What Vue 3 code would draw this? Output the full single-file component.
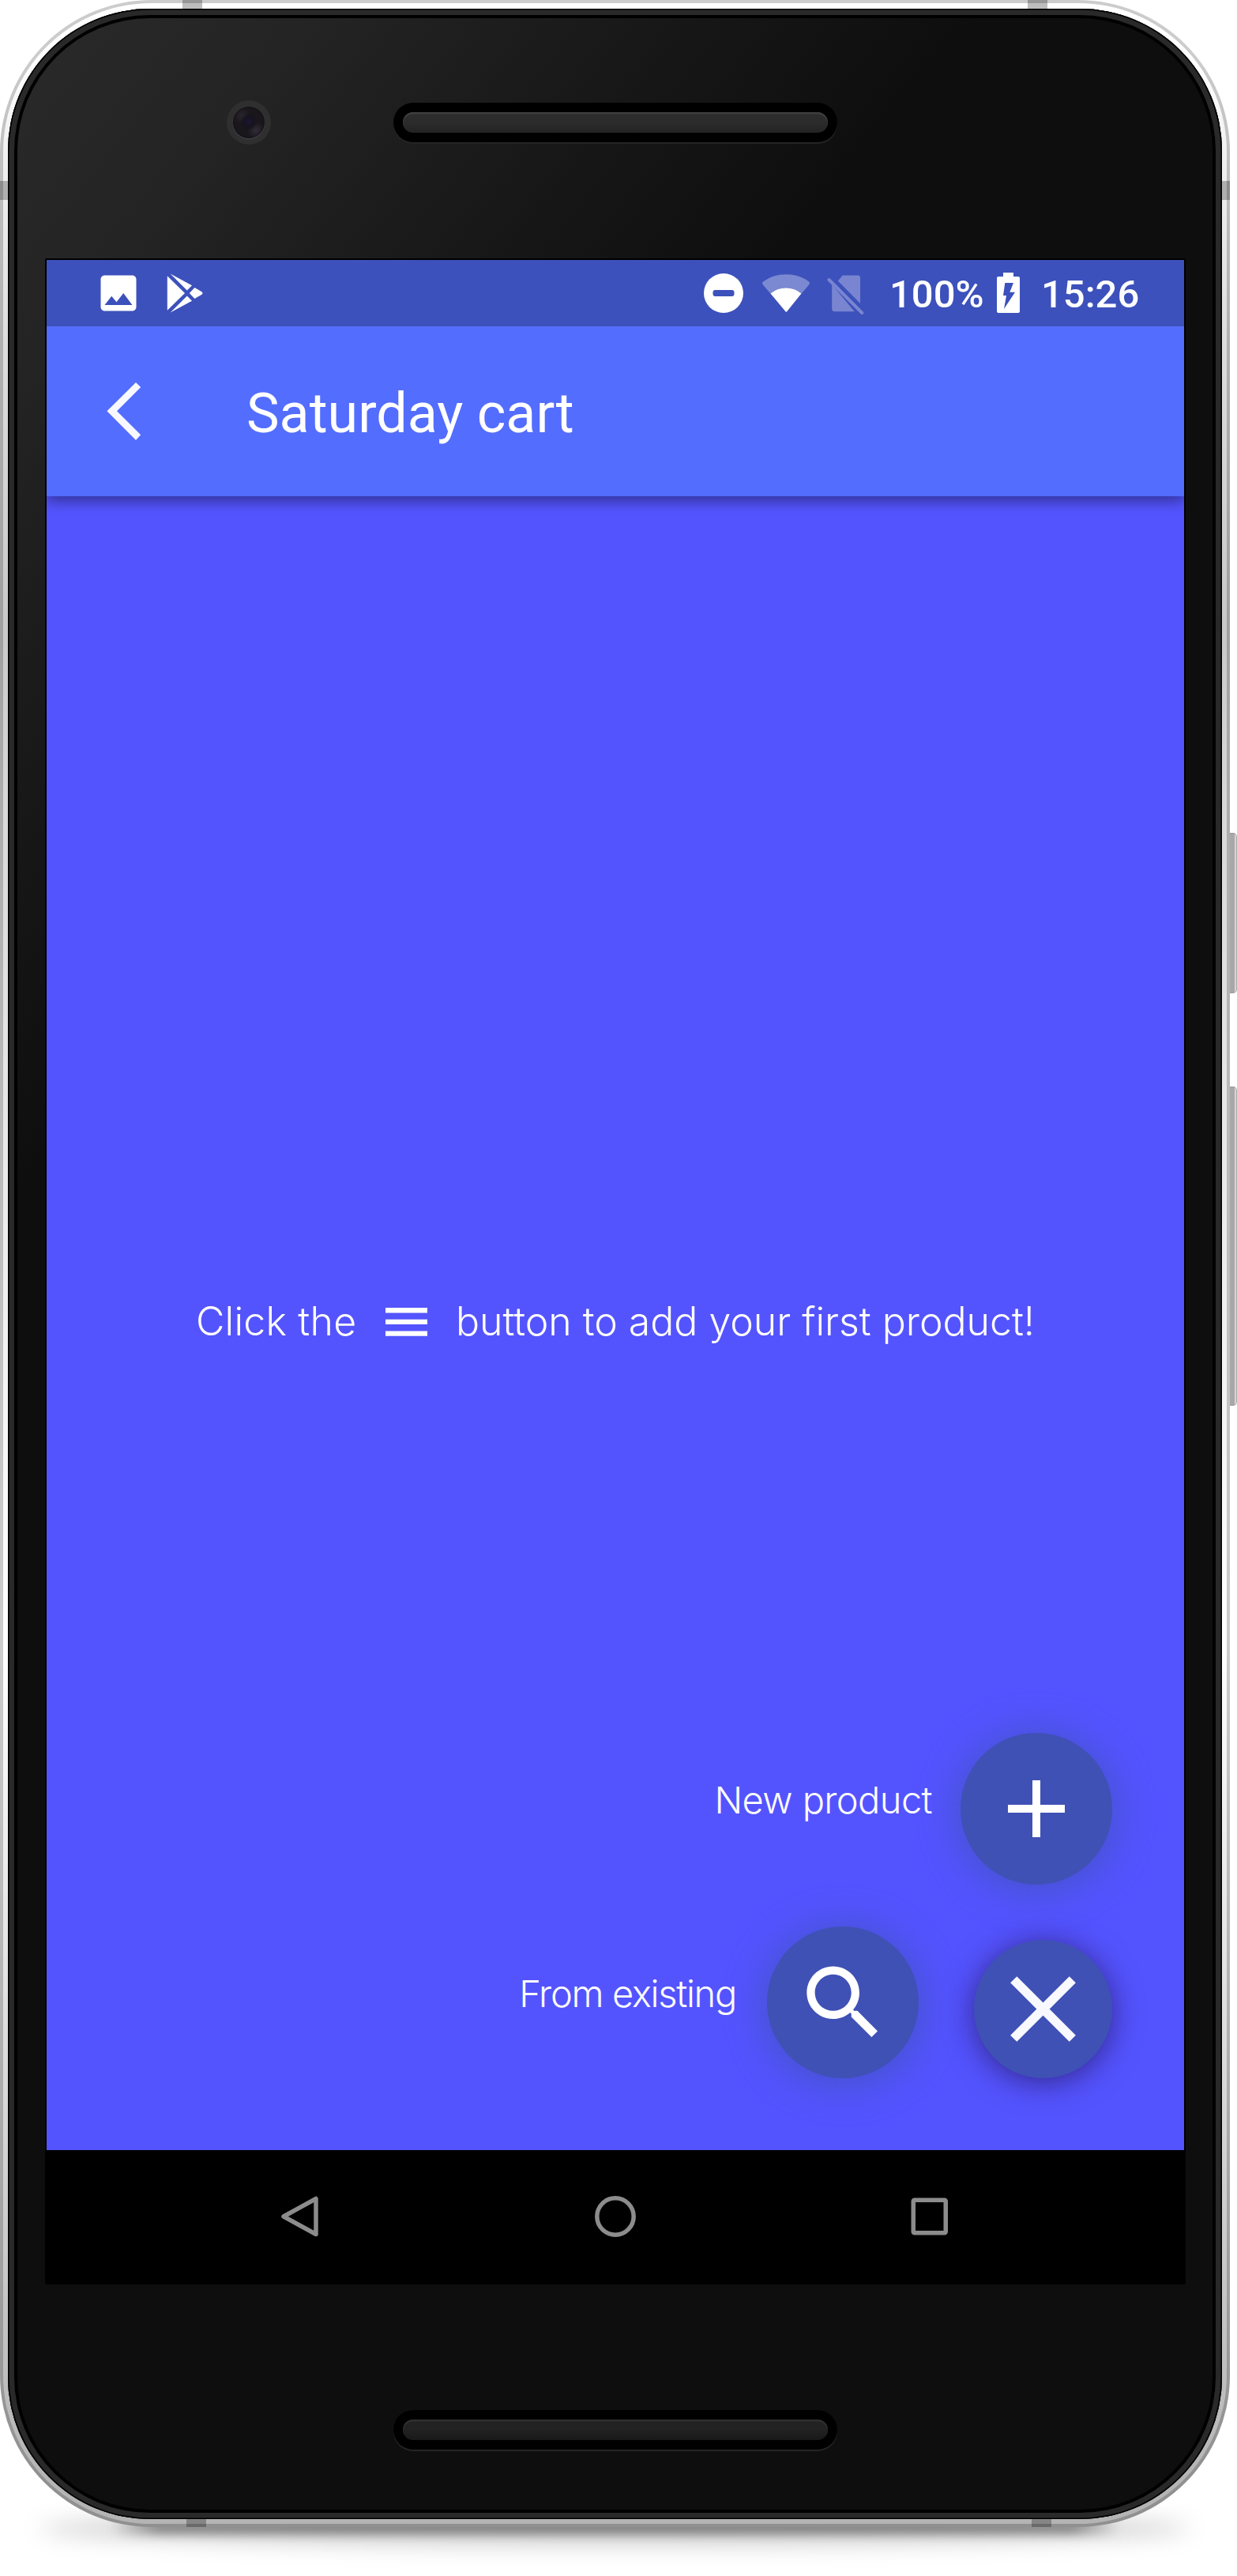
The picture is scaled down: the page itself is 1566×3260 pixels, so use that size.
<script setup>
const cartName = 'Saturday cart'
const time = '15:26'
const battery = '100%'
</script>

<template>
  <div class="stage">
    <div class="side-key power"></div>
    <div class="side-key volume"></div>
    <div class="ground-shadow wide"></div>
    <div class="ground-shadow tight"></div>
    <div class="phone">
      <i class="band top-left"></i>
      <i class="band top-right"></i>
      <i class="band side-left"></i>
      <i class="band side-right"></i>
      <i class="band bottom-left"></i>
      <i class="band bottom-right"></i>
      <div class="glass">
        <div class="forehead">
          <div class="camera"><span></span></div>
          <div class="speaker"><span></span></div>
        </div>

        <div class="screen">
          <header class="status">
            <svg class="st-image" width="60" height="60" viewBox="0 0 24 24" fill="#fff">
              <path d="M21 19V5c0-1.1-.9-2-2-2H5c-1.1 0-2 .9-2 2v14c0 1.1.9 2 2 2h14c1.1 0 2-.9 2-2zM8.5 13.5l2.500 3.010L14.500 12l4.500 6H5l3.500-4.500z" />
            </svg>
            <svg class="st-play" width="50" height="52" viewBox="209 345 50 52" fill="#fff">
              <path d="M211.800 349.300L234 371l-22.200 21.700z" />
              <path d="M215.700 346.500L243 361.300l-6.200 6.200z" />
              <path d="M215.700 395.500L243 380.700l-6.200-6.200z" />
              <path d="M246.400 364l8.600 5q3 2 0 4l-8.600 5-6.600-7z" />
            </svg>
            <svg class="st-dnd" width="50" height="50" viewBox="0 0 50 50">
              <circle cx="25" cy="25" r="25" fill="#fff" />
              <rect x="11.500" y="21" width="27" height="8" rx="3" fill="#3c51bb" />
            </svg>
            <svg class="st-wifi" width="60" height="48" viewBox="965 346.500 60 48" fill="#fff">
              <path opacity=".32" d="M995 394.300L966 360q-2-2.500 0-4 12-9.300 29-9.300t29 9.300q2 1.500 0 4z" />
              <path d="M995 394.300L975.600 371q8-7 19.400-7t19.400 7l-18 22.500q-1.400 1.500-2.800 0z" />
            </svg>
            <svg class="st-sim" width="47" height="50" viewBox="1047 347.500 47 50" fill="#7985d1">
              <path d="M1060.800 355l6-7h19q3.200 0 3.200 3.200v32.300z" />
              <path d="M1053.200 359.500l28.600 34.200h-25q-3.600 0-3.600-3.500z" />
              <path d="M1049.500 353.500l41.800 42" stroke="#7985d1" stroke-width="4" stroke-linecap="round" />
            </svg>
            <span class="st-text st-percent">{{ battery }}</span>
            <svg class="st-battery" width="29" height="51" viewBox="1262 345 29 51">
              <path fill="#fff" fill-rule="evenodd" d="M1270 345h13v5h6q2 0 2 2v42q0 2-2 2h-25q-2 0-2-2v-42q0-2 2-2h6zM1272.300 358l-2.300 16h4l-3 17 14-21.300h-6.700L1283 358z" />
            </svg>
            <span class="st-text st-time">{{ time }}</span>
          </header>

          <div class="toolbar">
            <svg class="back" width="45" height="74" viewBox="134 483 45 74" fill="#f8f8ff">
              <path d="M172 484l6.200 6L148 520.300l30.200 30-6.200 6.700-36.600-36.700z" />
            </svg>
            <h1 class="title">{{ cartName }}</h1>
          </div>

          <main class="content">
            <p class="hint">
              <span class="hint-a">Click the</span>
              <svg class="burger" width="53" height="36" viewBox="0 0 53 36" fill="#fff">
                <path d="M0 0h53v6.400H0zM0 14.700h53v6.400H0zM0 29.400h53v6.400H0z" />
              </svg>
              <span class="hint-b">button to add your first product!</span>
            </p>

            <div class="actions">
              <div class="action">
                <span class="label label-new">New product</span>
                <button class="fab">
                  <svg width="72" height="72" viewBox="0 0 72 72" fill="#fff">
                    <path d="M31 0h10v31h31v10H41v31H31V41H0V31h31z" />
                  </svg>
                </button>
              </div>
              <div class="action">
                <span class="label label-from">From existing</span>
                <button class="fab">
                  <svg width="123" height="123" viewBox="0 0 24 24" fill="#fff">
                    <path d="M15.500 14h-.79l-.28-.27C15.410 12.590 16 11.110 16 9.500 16 5.910 13.090 3 9.500 3S3 5.910 3 9.500 5.910 16 9.500 16c1.610 0 3.090-.59 4.230-1.570l.27.28v.79l5 4.990L20.490 19l-4.990-5zm-6 0C7.010 14 5 11.990 5 9.500S7.010 5 9.500 5 14 7.010 14 9.500 11.990 14 9.500 14z" />
                  </svg>
                </button>
                <button class="fab close">
                  <svg width="83" height="83" viewBox="0 0 83 83" stroke="#f8f8ff" stroke-width="11.500">
                    <path d="M4.200 4.200l74.600 74.600M78.800 4.200L4.200 78.800" />
                  </svg>
                </button>
              </div>
            </div>
          </main>

          <nav class="nav">
            <svg width="52" height="52" viewBox="0 0 52 52" fill="none" stroke="#8c8c8c" stroke-width="5.500" stroke-linejoin="round">
              <path d="M46 3.500v45L5 26z" />
            </svg>
            <svg width="52" height="52" viewBox="0 0 52 52" fill="none" stroke="#8c8c8c" stroke-width="5.500">
              <circle cx="26" cy="26" r="23.200" />
            </svg>
            <svg width="52" height="52" viewBox="0 0 52 52" fill="none" stroke="#8c8c8c" stroke-width="5.500">
              <rect x="5.250" y="5.250" width="41" height="41.500" rx="1.500" />
            </svg>
          </nav>
        </div>

        <div class="speaker lower"><span></span></div>
      </div>
    </div>
  </div>
</template>

<style>
body {
  margin: 0;
  background: #fff;
}
</style>

<style scoped>
.stage {
  position: relative;
  width: 1566px;
  height: 3260px;
  overflow: hidden;
  background: #fff;
}

/* hardware */
.phone {
  position: relative;
  box-sizing: border-box;
  width: 1557px;
  height: 3198px;
  padding: 11px 10px 10px;
  border-radius: 192px;
  background: linear-gradient(#fff 0, #fff 70px, #f0f0f0 200px, #dedede 420px, #c8c8c8 790px, #d8d8d8 1020px, #f6f6f6 1820px, #fff 2080px, #ccc 2820px, #b4b4b4 3150px);
}
.phone::after {
  content: '';
  position: absolute;
  inset: 0;
  border-radius: 192px;
  box-shadow: inset 0 0 0 4px rgba(0, 0, 0, 0.2);
  pointer-events: none;
}
.band {
  position: absolute;
  background: rgba(0, 0, 0, 0.26);
}
.top-left { left: 231px; top: 0; width: 25px; height: 11px; }
.top-right { left: 1301px; top: 0; width: 25px; height: 11px; }
.side-left { left: 0; top: 229px; width: 10px; height: 24px; }
.side-right { right: 0; top: 229px; width: 10px; height: 24px; }
.bottom-left { left: 236px; bottom: 0; width: 25px; height: 10px; }
.bottom-right { left: 1306px; bottom: 0; width: 25px; height: 10px; }

.side-key {
  position: absolute;
  left: 1550px;
  box-sizing: border-box;
  width: 16px;
  border: 1px solid #999;
  border-right: 1px solid #aaa;
  border-radius: 0 5px 5px 0;
  background: linear-gradient(90deg, #a8a8a8 12px, #d6d6d6 12px);
}
.power { top: 1054px; height: 203px; }
.volume { top: 1375px; height: 404px; }

.ground-shadow {
  position: absolute;
}
.wide {
  left: 50px;
  top: 3180px;
  width: 1457px;
  height: 40px;
  border-radius: 50%;
  background: rgba(0, 0, 0, 0.2);
  filter: blur(14px);
}
.tight {
  left: 140px;
  top: 3186px;
  width: 1277px;
  height: 22px;
  background: linear-gradient(90deg, transparent, rgba(0, 0, 0, 0.36) 60px, rgba(0, 0, 0, 0.36) 1217px, transparent);
  filter: blur(6px);
}

.glass {
  position: relative;
  box-sizing: border-box;
  width: 1537px;
  height: 3177px;
  border-radius: 180px;
  background: linear-gradient(129deg, #2a2a2a 0, #242424 300px, #161616 700px, #0e0e0e 960px);
  box-shadow: inset 0 0 0 1.5px #000, inset 0 0 0 8px #292929, inset 0 0 0 12px #000;
}
.forehead {
  display: flex;
  align-items: center;
  gap: 155px;
  height: 56px;
  padding: 116px 0 144px 277px;
}
.camera {
  display: flex;
  align-items: center;
  justify-content: center;
  width: 56px;
  height: 56px;
  border-radius: 50%;
  background: #2f2f2f;
}
.camera span {
  width: 40px;
  height: 40px;
  border-radius: 50%;
  background:
    radial-gradient(circle at 50% 48%, #1c1634 0, #17131f 6px, transparent 11px),
    radial-gradient(circle at 72% 75%, #312c36 0, transparent 11px),
    radial-gradient(circle at 28% 28%, #29252d 0, transparent 11px), #19161c;
  box-shadow: 0 1px 1px #484848, inset 0 0 2px #08060a;
}
.speaker {
  display: flex;
  align-items: center;
  justify-content: center;
  width: 562px;
  height: 50px;
  border-radius: 25px;
  background: #000;
  box-shadow: 0 2px 1px #262626;
}
.speaker span {
  width: 538px;
  height: 26px;
  border-radius: 13px;
  background: linear-gradient(#2c2c2c 50%, #232323);
  box-shadow: inset 0 2px 2px #454545;
}
.lower {
  margin: 159px 0 0 488px;
}
.lower span {
  background: linear-gradient(#222 50%, #191919);
  box-shadow: inset 0 2px 2px #343434;
}

/* screen */
.screen {
  width: 1440px;
  height: 2560px;
  margin-left: 47px;
  border: 2px solid #000;
  border-radius: 2px;
  display: flex;
  flex-direction: column;
  background: #5454ff;
  color: #fff;
  font-family: Roboto, sans-serif;
}
.status {
  display: flex;
  align-items: flex-start;
  box-sizing: border-box;
  height: 84px;
  background: #3c51bb;
}
.status > * { flex: none; }
.st-image { margin: 12px 0 0 61px; }
.st-play { margin: 16px 0 0 29px; }
.st-dnd { margin: 17px 0 0 632px; }
.st-wifi { margin: 17.5px 0 0 24px; }
.st-sim { margin: 18.5px 0 0 22px; }
.st-text {
  font-size: 49px;
  font-weight: 500;
  line-height: 57px;
  white-space: nowrap;
  margin-top: 15px;
}
.st-percent { width: 136px; margin-left: 32px; }
.st-battery { margin-top: 16px; }
.st-time { margin-left: 27px; }

.toolbar {
  position: relative;
  z-index: 1;
  display: flex;
  align-items: flex-start;
  height: 215px;
  background: #536dfe;
  box-shadow: 0 7px 16px rgba(0, 0, 0, 0.38);
  clip-path: inset(0 0 -40px 0);
}
.back { margin: 70px 0 0 75px; }
.title {
  margin: 69px 0 0 133px;
  font-size: 70px;
  line-height: 82px;
  font-weight: 400;
  white-space: nowrap;
}

.content {
  position: relative;
  flex: 1;
  display: flex;
  align-items: center;
  font-family: Inter, sans-serif;
  font-weight: 300;
}
.hint {
  display: flex;
  align-items: center;
  margin: 0 0 4px 189px;
  font-size: 50px;
  line-height: 60px;
  white-space: nowrap;
}
.hint-a { width: 240px; letter-spacing: 0.2px; }
.hint-b { margin-left: 36px; letter-spacing: -0.03px; }
.hint-a,
.hint-b { position: relative; top: -1px; }
.burger { flex: none; }

.actions {
  position: absolute;
  right: 91px;
  bottom: 91px;
  display: flex;
  flex-direction: column;
  align-items: flex-end;
  gap: 53px;
}
.action {
  display: flex;
  align-items: flex-end;
}
.label {
  font-size: 47px;
  line-height: 56px;
  white-space: nowrap;
  margin-bottom: 79px;
}
.label-new { margin-right: 36px; letter-spacing: -0.6px; }
.label-from { margin-right: 39px; letter-spacing: -1.3px; }
.fab {
  display: flex;
  align-items: center;
  justify-content: center;
  width: 192px;
  height: 192px;
  padding: 0;
  border: 0;
  border-radius: 50%;
  background: #3f51b5;
  box-shadow: 0 4px 50px 4px rgba(63, 81, 181, 0.75);
}
.close {
  width: 175px;
  height: 175px;
  margin-left: 70px;
  box-shadow: 0 5px 38px rgba(30, 10, 60, 0.6);
}

.nav {
  display: flex;
  align-items: center;
  justify-content: space-between;
  box-sizing: border-box;
  height: 168px;
  padding: 0 296px 0 295px;
  background: #000;
}
</style>
